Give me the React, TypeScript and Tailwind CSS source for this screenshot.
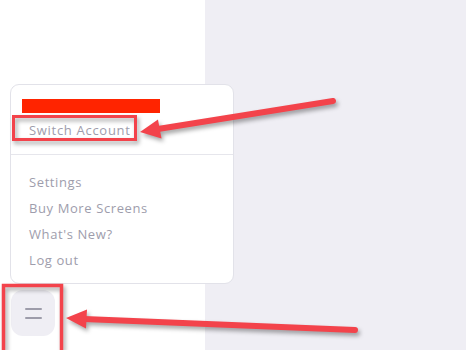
import React from "react";

const menuItems = ["Settings", "Buy More Screens", "What's New?", "Log out"];

const Annotations: React.FC = () => (
  <svg
    className="absolute inset-0 pointer-events-none drop-shadow-[2px_3px_2px_rgba(0,0,0,0.35)]"
    width="466"
    height="350"
    viewBox="0 0 466 350"
  >
    {/* boxes */}
    <rect x="13.5" y="116.5" width="122" height="23" fill="none" stroke="#f3434b" strokeWidth="3" />
    <rect x="3.5" y="285.5" width="58" height="70" fill="none" stroke="#f3434b" strokeWidth="3.5" />
    {/* arrow to Switch Account */}
    <line x1="333" y1="101" x2="158" y2="129" stroke="#f3434b" strokeWidth="6" strokeLinecap="round" />
    <polygon points="140,132 161.5,138.5 158,119.5" fill="#f3434b" />
    {/* arrow to menu button */}
    <line x1="355" y1="330" x2="84" y2="319" stroke="#f3434b" strokeWidth="6" strokeLinecap="round" />
    <polygon points="66,318 86,328.5 87,309.5" fill="#f3434b" />
  </svg>
);

export default function App() {
  return (
    <div
      className="relative flex w-[466px] h-[350px] overflow-hidden bg-[#efeef4]"
      style={{ fontFamily: '"Open Sans", "Noto Sans", sans-serif' }}
    >
      {/* Sidebar */}
      <div className="w-[205px] shrink-0 bg-white pt-[84px] pl-[10px]">
        <div className="w-[224px] rounded-[9px] border border-[#e2e2e9] bg-white">
          <div className="border-b border-[#e6e6ec] pl-[11px] pt-[14px] pb-[14px]">
            <div className="w-[138px] h-[14px] bg-[#ff2400]" />
            <div className="mt-[7px] pl-[7px] text-[13px] leading-[20px] tracking-[0.7px] text-[#9e9dac]">
              Switch Account
            </div>
          </div>
          <ul className="pt-[14px] pb-[10px] pl-[18px]">
            {menuItems.map((item) => (
              <li key={item} className="text-[13px] leading-[26px] tracking-[0.6px] text-[#9e9dac]">
                {item}
              </li>
            ))}
          </ul>
        </div>
        <button className="mt-[6px] ml-px flex h-[46px] w-[44px] flex-col items-center justify-center gap-[7px] rounded-[12px] bg-[#efeef4]">
          <span className="block h-[2px] w-[17px] rounded bg-[#9d9caa]" />
          <span className="block h-[2px] w-[17px] rounded bg-[#9d9caa]" />
        </button>
      </div>
      {/* Main area */}
      <div className="flex-1" />
      <Annotations />
    </div>
  );
}
